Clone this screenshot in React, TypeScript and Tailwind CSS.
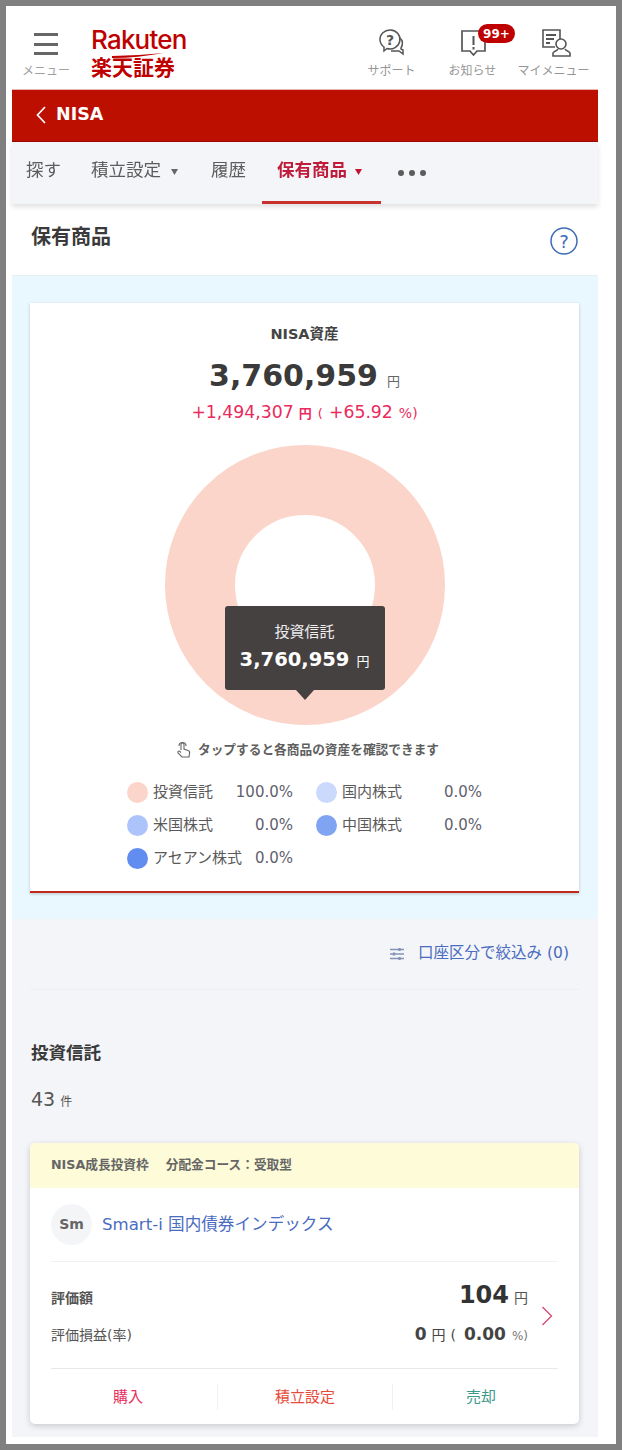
import React from "react";

const FONT = "font-['DejaVu_Sans','Noto_Sans_CJK_JP',sans-serif]";

function TopIcon({ label, children }: { label: string; children: React.ReactNode }) {
  return (
    <div className="relative flex h-full w-[81px] flex-col items-center pt-[20px]">
      <div className="h-[34px] w-[40px]">{children}</div>
      <span className="mt-[3px] text-[12px] leading-[16px] whitespace-nowrap text-[#969696]">{label}</span>
    </div>
  );
}

function Tab({ label, active, caret }: { label: string; active?: boolean; caret?: boolean }) {
  return (
    <div
      className={`flex h-full items-center ${active ? "w-[119px] border-b-[3px] border-[#c8322c] pb-[1px] pl-[15px] font-bold text-[#bf1b3a]" : "pb-[4px] text-[#5c5c5c]"}`}
    >
      <span className="text-[17.500px] leading-none">{label}</span>
      {caret && (
        <svg width="7" height="6" viewBox="0 0 7 6" className={`mt-[2px] ${active ? "ml-[8px]" : "ml-[10px]"}`}>
          <path d="M0 0h7L3.500 6z" fill={active ? "#c41230" : "#666"} />
        </svg>
      )}
    </div>
  );
}

function Legend({ color, label, value }: { color: string; label: string; value: string }) {
  return (
    <div className="flex h-[33px] items-center text-[15px] text-[#5a5a5a]">
      <span className="h-[21px] w-[21px] shrink-0 rounded-full" style={{ backgroundColor: color }} />
      <span className="ml-[5px] whitespace-nowrap">{label}</span>
      <span className="ml-auto text-[#5f5f6e]">{value}</span>
    </div>
  );
}

export default function App() {
  return (
    <div className={`${FONT} h-[1450px] w-[622px] overflow-hidden bg-[#808080] pt-[6px] pr-[6px] pb-[6px] pl-[6px]`}>
      <div className="h-[1438px] bg-white pr-[12px] pl-[6px] blur-[0.7px]">
        <div className="w-[586px] bg-[#f4f5f8]">
          {/* header */}
          <header className="flex h-[84px] items-start border-b border-[#e9b5b0] bg-white">
            <div className="ml-[10px] flex w-[48px] flex-col items-center pt-[27px]">
              <div className="flex h-[22px] w-[24px] flex-col justify-between">
                <span className="h-[3px] bg-[#666]" />
                <span className="h-[3px] bg-[#666]" />
                <span className="h-[3px] bg-[#666]" />
              </div>
              <span className="mt-[8px] text-[12px] leading-[16px] whitespace-nowrap text-[#a0a0a0]">メニュー</span>
            </div>
            <div className="relative ml-[21px] flex flex-col pt-[19px] text-[#bf0000]">
              <span className="font-['Inter',sans-serif] text-[26px] leading-[30px] font-medium tracking-[-0.8px]">Rakuten</span>
              <svg width="52" height="5" viewBox="0 0 52 5" className="absolute top-[47px] left-[21px]">
                <path d="M0 5C18 5 34 3 52 0C36 1.500 18 2.500 0 3z" fill="#bf0000" />
              </svg>
              <span className="mt-[1px] text-[21px] leading-[24px] font-bold">楽天証券</span>
            </div>
            <div className="ml-auto flex h-full pr-[4px]">
              <TopIcon label="サポート">
                <svg viewBox="0 0 40 34" fill="none" stroke="#555" strokeWidth="1.500" className="h-[34px] w-[40px]">
                  <path d="M8 14a10 9.500 0 1 1 7 8.500l-3 2.500v-4a10 9.500 0 0 1-4-7z" />
                  <path d="M28 12c3 2 3 7 1 10v1l2 1v4l-4-3h-8" />
                  <text x="14" y="19" fontSize="14" fill="#555" stroke="none" fontWeight="700">?</text>
                </svg>
              </TopIcon>
              <TopIcon label="お知らせ">
                <svg viewBox="0 0 40 34" fill="none" stroke="#555" strokeWidth="1.700" className="h-[34px] w-[40px]">
                  <path d="M9 5h23v20H24l-3.500 4-3.500-4H9z" />
                  <path d="M20.500 10v9M20.500 21v2.500" strokeWidth="2" />
                </svg>
                <span className="absolute top-[18px] left-[46px] flex h-[19px] w-[37px] items-center justify-center rounded-[10px] bg-[#bf0000] text-[12px] leading-none font-bold text-white">99+</span>
              </TopIcon>
              <TopIcon label="マイメニュー">
                <svg viewBox="0 0 40 34" fill="none" stroke="#555" strokeWidth="1.600" className="h-[34px] w-[40px]">
                  <path d="M21 21H9V4h17v9" />
                  <path d="M12 9h10M12 13h8M12 17h4" strokeWidth="2" />
                  <circle cx="27" cy="18" r="5" />
                  <path d="M24 23c-1 2-4 2-5 4v3h17v-3c-1-2-4-2-5-4" />
                </svg>
              </TopIcon>
            </div>
          </header>

          {/* red bar */}
          <div className="flex h-[52px] items-center border-b border-[#9c0d00] bg-[#bc0f00] pb-[2px] pl-[24px] text-white">
            <svg width="10" height="18" viewBox="0 0 10 18" fill="none" stroke="white" strokeWidth="1.700">
              <path d="M9 1L1.500 9 9 17" />
            </svg>
            <span className="ml-[10px] text-[17.500px] leading-none font-bold">NISA</span>
          </div>

          {/* tabs */}
          <nav className="relative flex h-[62px] items-center shadow-[0_3px_5px_rgba(0,0,0,0.12)]">
            <div className="ml-[14px] flex h-full w-[65px]"><Tab label="探す" /></div>
            <div className="flex h-full w-[120px]"><Tab label="積立設定" caret /></div>
            <div className="flex h-full w-[51px]"><Tab label="履歴" /></div>
            <Tab label="保有商品" active caret />
            <div className="ml-[17px] flex gap-[5px]">
              <span className="h-[6px] w-[6px] rounded-full bg-[#5c5c5c]" />
              <span className="h-[6px] w-[6px] rounded-full bg-[#5c5c5c]" />
              <span className="h-[6px] w-[6px] rounded-full bg-[#5c5c5c]" />
            </div>
          </nav>

          {/* title */}
          <div className="flex h-[72px] items-start justify-between border-b border-[#e6eef2] bg-white pr-[20px] pl-[19px]">
            <h1 className="mt-[21px] text-[20px] leading-[24px] font-bold text-[#3a3a3a]">保有商品</h1>
            <svg width="28" height="28" viewBox="0 0 28 28" fill="none" className="mt-[23px]">
              <circle cx="14" cy="14" r="13" stroke="#3f6cb8" strokeWidth="1.500" />
              <text x="14" y="20.500" textAnchor="middle" fontSize="18" fill="#3f6cb8">?</text>
            </svg>
          </div>

          {/* summary */}
          <section className="h-[643px] bg-[#e8f8fe] pt-[27px] pr-[19px] pl-[18px]">
            <div className="flex h-[590px] flex-col items-center border-b-[2px] border-[#c0281c] bg-white shadow-[0_1px_3px_rgba(0,0,0,0.2)]">
              <div className="mt-[20px] text-[14.500px] leading-[22px] font-bold text-[#444]">NISA資産</div>
              <div className="mt-[10px] flex items-baseline text-[#3a3a3a]">
                <span className="text-[30px] leading-[42px] font-bold">3,760,959</span>
                <span className="ml-[9px] text-[13px] text-[#666]">円</span>
              </div>
              <div className="mt-[5px] flex items-baseline text-[17.300px] leading-[20px] text-[#ea2a5c]">
                <span>+1,494,307</span>
                <span className="ml-[5px] text-[13px] font-bold">円</span>
                <span className="ml-[6px] text-[13px]">(</span>
                <span className="ml-[6px]">+65.92</span>
                <span className="ml-[6px] text-[14px]">%)</span>
              </div>
              <div className="relative mt-[21px] h-[280px] w-[280px]">
                <svg width="280" height="280" viewBox="0 0 280 280">
                  <circle cx="140" cy="140" r="105" fill="none" stroke="#fbd5c9" strokeWidth="70" />
                </svg>
                <div className="absolute top-[161px] left-[60px] flex h-[84px] w-[160px] flex-col items-center rounded-[3px] bg-[#454141] pt-[16px] text-white">
                  <span className="text-[15px] leading-[20px] text-[#eee]">投資信託</span>
                  <div className="mt-[4px] flex items-baseline">
                    <span className="text-[19.500px] leading-[28px] font-bold">3,760,959</span>
                    <span className="ml-[7px] text-[13px]">円</span>
                  </div>
                  <span className="absolute top-[84px] left-[71px] h-0 w-0 border-x-[9px] border-t-[10px] border-x-transparent border-t-[#454141]" />
                </div>
              </div>
              <div className="mt-[15px] ml-[6px] flex items-center text-[12.700px] leading-[20px] font-bold text-[#5f5f5f]">
                <svg width="16" height="18" viewBox="0 0 16 18" fill="none" stroke="#666" strokeWidth="1.100" className="mr-[6px]">
                  <path d="M5 9V3.500a1.500 1.500 0 0 1 3 0V8l4 1.500c1.500.5 2 1.500 1.500 3L13 16H6l-4-4c-.6-1 .5-2.500 1.600-1.800L5 11.500" />
                  <path d="M3 5a3.500 3.500 0 0 1 7 0" />
                </svg>
                タップすると各商品の資産を確認できます
              </div>
              <div className="mt-[16px] grid w-[355px] grid-cols-[166px_166px] gap-x-[23px]">
                <Legend color="#fbd5c9" label="投資信託" value="100.0%" />
                <Legend color="#cbd9fd" label="国内株式" value="0.0%" />
                <Legend color="#adc3fc" label="米国株式" value="0.0%" />
                <Legend color="#80a3f2" label="中国株式" value="0.0%" />
                <Legend color="#628df0" label="アセアン株式" value="0.0%" />
              </div>
            </div>
          </section>

          {/* filter */}
          <div className="mx-[18px] flex h-[71px] items-center justify-end border-b border-[#eeeff1] pr-[11px] text-[15.500px] text-[#4a6cc0]">
            <svg width="14" height="14" viewBox="0 0 14 14" fill="none" stroke="#8494b8" strokeWidth="1.300" className="mr-[14px]">
              <path d="M0 2.500h14M0 7h14M0 11.500h14" />
              <path d="M9.500 1v3M4 5.500v3M9.500 10v3" strokeWidth="2.400" />
            </svg>
            口座区分で絞込み (0)
          </div>

          <h2 className="mt-[51px] ml-[19px] text-[17.500px] leading-[24px] font-bold text-[#3a3a3a]">投資信託</h2>
          <div className="mt-[20px] ml-[19px] flex items-baseline text-[#555]">
            <span className="text-[19px] leading-[28px]">43</span>
            <span className="ml-[5px] text-[12px]">件</span>
          </div>

          {/* fund card */}
          <article className="mt-[30px] mr-[19px] ml-[18px] overflow-hidden rounded-[5px] bg-white shadow-[0_2px_6px_rgba(0,0,0,0.18)]">
            <div className="flex h-[45px] items-center bg-[#fdfbd8] pb-[2px] pl-[21px] text-[12.700px] font-bold text-[#666]">
              <span>NISA成長投資枠</span>
              <span className="ml-[17px]">分配金コース：受取型</span>
            </div>
            <div className="px-[21px]">
              <div className="flex h-[74px] items-center border-b border-[#f2f2f4]">
                <span className="flex h-[41px] w-[41px] items-center justify-center rounded-full bg-[#f4f5f7] text-[14px] font-bold text-[#666]">Sm</span>
                <span className="mt-[2px] ml-[10px] text-[16.600px] text-[#4a6cc0]">Smart-i 国内債券インデックス</span>
              </div>
              <div className="relative h-[107px] border-b border-[#e8e8ea] pr-[30px]">
                <div className="flex items-baseline justify-between pt-[15px]">
                  <span className="text-[14px] font-bold text-[#555]">評価額</span>
                  <span className="flex items-baseline text-[#333]">
                    <span className="text-[24px] leading-[36px] font-bold">104</span>
                    <span className="ml-[5px] text-[14px] text-[#555]">円</span>
                  </span>
                </div>
                <div className="mt-[9px] flex items-baseline justify-between">
                  <span className="text-[14px] text-[#555]">評価損益(率)</span>
                  <span className="flex items-baseline text-[17px] leading-[24px] font-bold text-[#444]">
                    0<span className="ml-[5px] text-[14px] font-normal">円</span>
                    <span className="ml-[5px] text-[14px] font-normal">(</span>
                    <span className="ml-[8px]">0.00</span>
                    <span className="ml-[6px] text-[12px] font-normal text-[#777]">%)</span>
                  </span>
                </div>
                <svg width="12" height="20" viewBox="0 0 12 20" fill="none" stroke="#d8456e" strokeWidth="1.300" className="absolute top-[44px] right-[5px]">
                  <path d="M1.500 1l9 9-9 9" />
                </svg>
              </div>
              <div className="grid h-[55px] grid-cols-[166px_176px_166px] items-center text-[15px] leading-[26px]">
                <span className="pr-[12px] text-center text-[#e8315f]">購入</span>
                <span className="border-x border-[#f0f0f2] text-center text-[#e84a3a]">積立設定</span>
                <span className="pl-[10px] text-center text-[#3d9a8a]">売却</span>
              </div>
            </div>
          </article>
          <div className="h-[13px]" />
        </div>
      </div>
    </div>
  );
}
